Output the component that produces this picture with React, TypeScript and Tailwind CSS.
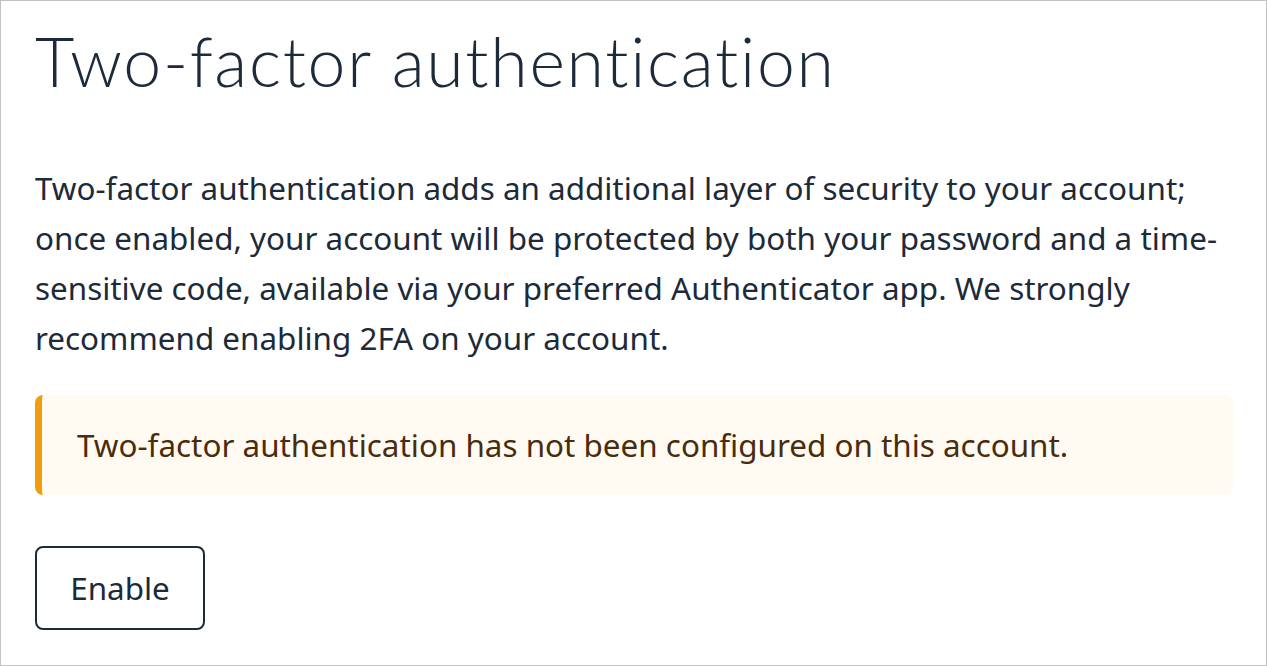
export default function App() {
  return (
    <div className="h-[666px] w-[1267px] overflow-hidden bg-white">
      <div className="h-full w-full border border-[#c2c2c2] px-[34px] pt-[20px]">
        <h1
          className="text-[68px] font-light leading-[80px] tracking-[1.7px] text-[#1c2a3a]"
          style={{ fontFamily: 'Lato, "Noto Sans", sans-serif' }}
        >
          Two-factor authentication
        </h1>
        <div style={{ fontFamily: '"Noto Sans", "Open Sans", sans-serif' }}>
          <p className="mt-[62px] text-[31.4px] leading-[50px] text-[#1c2a3a]">
            Two-factor authentication adds an additional layer of security to your account;
            once enabled, your account will be protected by both your password and a
            time-sensitive code, available via your preferred Authenticator app. We strongly
            recommend enabling 2FA on your account.
          </p>
          <div className="mt-[32px] flex h-[100px] w-[1198px] items-center rounded-lg border-l-[7px] border-[#f29d0b] bg-[#fffbf3] pl-[35px] text-[31.4px] text-[#4a2c0c]">
            Two-factor authentication has not been configured on this account.
          </div>
          <button className="mt-[51px] flex h-[84px] w-[170px] items-center justify-center rounded-lg border-2 border-[#1c2a3a] text-[31.4px] text-[#1c2a3a]">
            Enable
          </button>
        </div>
      </div>
    </div>
  )
}
